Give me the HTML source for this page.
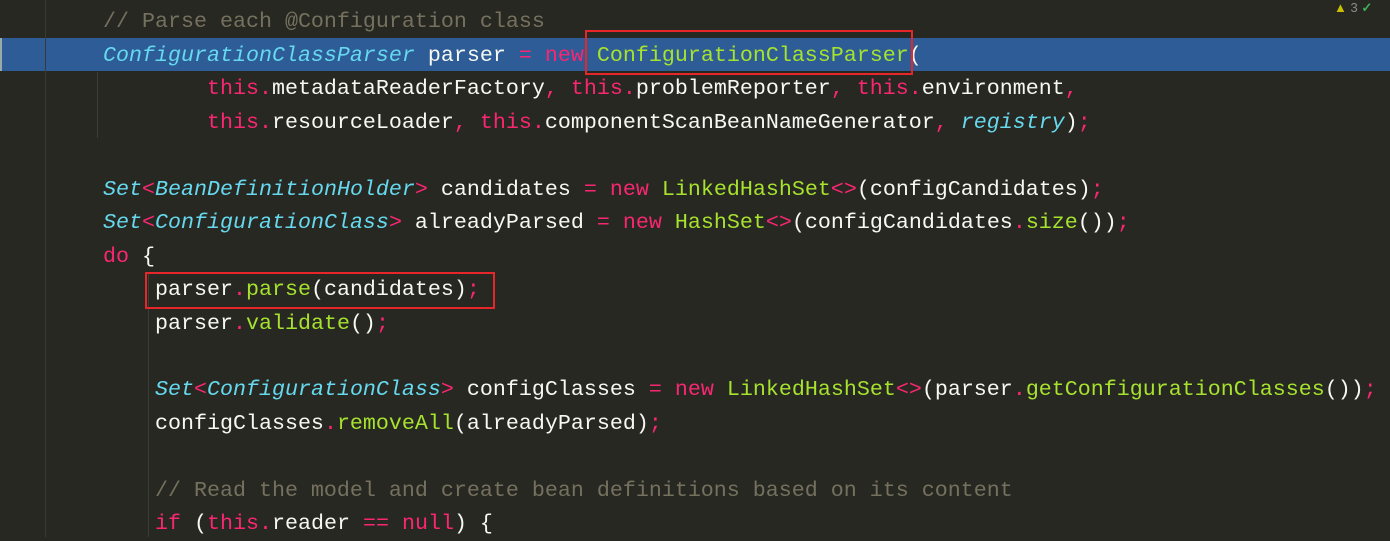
<!DOCTYPE html>
<html><head><meta charset="utf-8"><style>
body{margin:0;width:1390px;height:537px;background:#272822;overflow:hidden;position:relative;font-family:"Liberation Mono",monospace;font-size:21.67px;color:#f8f8f2}
.l{position:absolute;left:103px;height:34px;line-height:34px;white-space:pre;margin-top:1px}
.k{color:#f92672}.f{color:#a6e22e}.t{color:#66d9ef;font-style:italic}.c{color:#75715e}.p{color:#f92672}
.band{position:absolute;left:0;top:38px;width:1390px;height:33px;background:#2d5c97}
.gut{position:absolute;left:45px;top:0;width:1px;height:537px;background:#393a34}
.g{position:absolute;width:1px;background:#3b3c36}
.box{position:absolute;border:2px solid #e5262b;box-sizing:border-box}
</style></head><body>
<div class="band"></div>
<div class="gut"></div>
<div style="position:absolute;left:0;top:38px;width:2px;height:33px;background:#9aa"></div>
<div class="g" style="left:97px;top:72px;height:66px"></div>
<div class="g" style="left:148px;top:272px;height:265px"></div>
<div class="l c" style="top:4px">// Parse each @Configuration class</div>
<div class="l" style="top:38px"><span class="t">ConfigurationClassParser</span> parser <span class="k">=</span> <span class="k">new</span> <span class="f">ConfigurationClassParser</span>(</div>
<div class="l" style="top:71px">        <span class="k">this</span><span class="p">.</span>metadataReaderFactory<span class="p">,</span> <span class="k">this</span><span class="p">.</span>problemReporter<span class="p">,</span> <span class="k">this</span><span class="p">.</span>environment<span class="p">,</span></div>
<div class="l" style="top:105px">        <span class="k">this</span><span class="p">.</span>resourceLoader<span class="p">,</span> <span class="k">this</span><span class="p">.</span>componentScanBeanNameGenerator<span class="p">,</span> <span class="t">registry</span>)<span class="p">;</span></div>
<div class="l" style="top:172px"><span class="t">Set</span><span class="k">&lt;</span><span class="t">BeanDefinitionHolder</span><span class="k">&gt;</span> candidates <span class="k">=</span> <span class="k">new</span> <span class="f">LinkedHashSet</span><span class="k">&lt;&gt;</span>(configCandidates)<span class="p">;</span></div>
<div class="l" style="top:205px"><span class="t">Set</span><span class="k">&lt;</span><span class="t">ConfigurationClass</span><span class="k">&gt;</span> alreadyParsed <span class="k">=</span> <span class="k">new</span> <span class="f">HashSet</span><span class="k">&lt;&gt;</span>(configCandidates<span class="p">.</span><span class="f">size</span>())<span class="p">;</span></div>
<div class="l" style="top:239px"><span class="k">do</span> {</div>
<div class="l" style="top:272px">    parser<span class="p">.</span><span class="f">parse</span>(candidates)<span class="p">;</span></div>
<div class="l" style="top:306px">    parser<span class="p">.</span><span class="f">validate</span>()<span class="p">;</span></div>
<div class="l" style="top:372px">    <span class="t">Set</span><span class="k">&lt;</span><span class="t">ConfigurationClass</span><span class="k">&gt;</span> configClasses <span class="k">=</span> <span class="k">new</span> <span class="f">LinkedHashSet</span><span class="k">&lt;&gt;</span>(parser<span class="p">.</span><span class="f">getConfigurationClasses</span>())<span class="p">;</span></div>
<div class="l" style="top:406px">    configClasses<span class="p">.</span><span class="f">removeAll</span>(alreadyParsed)<span class="p">;</span></div>
<div class="l c" style="top:473px">    // Read the model and create bean definitions based on its content</div>
<div class="l" style="top:506px">    <span class="k">if</span> (<span class="k">this</span><span class="p">.</span>reader <span class="k">==</span> <span class="k">null</span>) {</div>
<div class="box" style="left:585px;top:30px;width:328px;height:45px"></div>
<div class="box" style="left:145px;top:272px;width:350px;height:37px"></div>
<div style="position:absolute;left:1334px;top:0;font-family:'Liberation Sans',sans-serif;font-size:13px;color:#8a8a8a"><span style="color:#c8c000">▲</span> 3 <span style="color:#3fae5a;font-weight:bold">✓</span></div>
</body></html>
